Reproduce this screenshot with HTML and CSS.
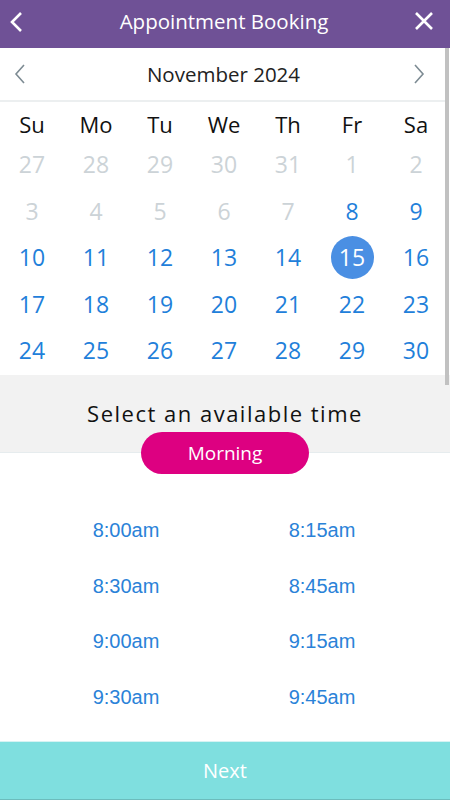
FILE: index.html
```html
<!DOCTYPE html>
<html>
<head>
<meta charset="utf-8">
<link rel="stylesheet" href="styles.css">
</head>
<body>
<div class="app">
  <header class="topbar">
    <svg class="tb-icon back" width="14" height="22" viewBox="0 0 14 22"><path d="M12 2 L3 11 L12 20" fill="none" stroke="#fff" stroke-width="2.6"/></svg>
    <div class="title">Appointment Booking</div>
    <svg class="tb-icon close" width="20" height="20" viewBox="0 0 20 20"><path d="M2 2 L18 18 M18 2 L2 18" fill="none" stroke="#fff" stroke-width="2.6"/></svg>
  </header>
  <div class="scroll">
    <div class="monthbar">
      <svg width="12" height="22" viewBox="0 0 12 22"><path d="M10 2 L2 11 L10 20" fill="none" stroke="#7d8b93" stroke-width="1.6"/></svg>
      <div class="month">November 2024</div>
      <svg width="12" height="22" viewBox="0 0 12 22"><path d="M2 2 L10 11 L2 20" fill="none" stroke="#7d8b93" stroke-width="1.6"/></svg>
    </div>
    <div class="cal">
      <div class="dow">Su</div><div class="dow">Mo</div><div class="dow">Tu</div><div class="dow">We</div><div class="dow">Th</div><div class="dow">Fr</div><div class="dow">Sa</div>
      <div class="d off">27</div><div class="d off">28</div><div class="d off">29</div><div class="d off">30</div><div class="d off">31</div><div class="d off">1</div><div class="d off">2</div>
      <div class="d off">3</div><div class="d off">4</div><div class="d off">5</div><div class="d off">6</div><div class="d off">7</div><div class="d">8</div><div class="d">9</div>
      <div class="d">10</div><div class="d">11</div><div class="d">12</div><div class="d">13</div><div class="d">14</div><div class="d"><span class="sel">15</span></div><div class="d">16</div>
      <div class="d">17</div><div class="d">18</div><div class="d">19</div><div class="d">20</div><div class="d">21</div><div class="d">22</div><div class="d">23</div>
      <div class="d">24</div><div class="d">25</div><div class="d">26</div><div class="d">27</div><div class="d">28</div><div class="d">29</div><div class="d">30</div>
    </div>
    <div class="timehead">
      <div class="prompt">Select an available time</div>
    </div>
    <div class="pillrow"><div class="pill">Morning</div></div>
    <div class="slots">
      <div class="slot">8:00am</div><div class="slot">8:15am</div>
      <div class="slot">8:30am</div><div class="slot">8:45am</div>
      <div class="slot">9:00am</div><div class="slot">9:15am</div>
      <div class="slot">9:30am</div><div class="slot">9:45am</div>
    </div>
    <div class="scrollbar"></div>
  </div>
  <div class="next">Next</div>
</div>
</body>
</html>
```
FILE: styles.css
```css
* { box-sizing: border-box; }
html, body { margin: 0; padding: 0; }
body { width: 450px; height: 800px; overflow: hidden; background: #fff; font-family: "Open Sans", "Liberation Sans", sans-serif; }
.app { width: 450px; height: 800px; display: flex; flex-direction: column; }
.topbar { height: 48px; background: #6f5196; display: flex; align-items: center; justify-content: space-between; padding: 0 16px 0 9px; flex-shrink: 0; }
.topbar .back { margin-top: -4px; }
.topbar .close { margin-top: -6px; }
.title { color: #fff; font-size: 20.5px; margin-top: -6px; margin-left: 11px; }
.scroll { position: relative; flex: 1; overflow: hidden; }
.monthbar { height: 54px; display: flex; align-items: center; justify-content: space-between; padding: 0 20px 0 14px; border-bottom: 2px solid #eceff0; margin-right: 5px; }
.month { font-size: 20.5px; color: #222; margin-top: 0; margin-left: 8px; }
.cal { display: grid; grid-template-columns: repeat(7, 64px); padding-left: 0; }
.dow { height: 39px; padding-top: 5px; display: flex; align-items: center; justify-content: center; font-size: 22px; color: #111; }
.d { height: 46.5px; display: flex; align-items: center; justify-content: center; font-size: 23px; color: #1f80da; }
.d.off { color: #ccd3d7; }
.sel { width: 43px; height: 43px; border-radius: 50%; background: #4a8fe3; color: #fff; display: flex; align-items: center; justify-content: center; }
.timehead { background: #f2f2f2; height: 78px; margin-top: 1px; border-bottom: 1px solid #e6ecee; display: flex; justify-content: center; padding-top: 23px; }
.prompt { font-size: 22px; letter-spacing: 1.5px; color: #111; }
.pillrow { display: flex; justify-content: center; margin-top: -21px; position: relative; }
.pill { width: 168px; height: 42px; border-radius: 21px; background: #dd0081; color: #fff; font-size: 19px; display: flex; align-items: center; justify-content: center; }
.slots { display: grid; grid-template-columns: 196px 196px; grid-auto-rows: 55.7px; padding: 29px 30px 0 28px; font-family: "Liberation Sans", Arial, sans-serif; }
.slot { display: flex; align-items: center; justify-content: center; color: #2a82d8; font-size: 20px; }
.scrollbar { position: absolute; right: 1px; top: 0; width: 4px; height: 337px; background: #c1c1c1; }
.next { height: 59px; flex-shrink: 0; background: #7fdfdf; color: #fff; font-size: 20px; display: flex; align-items: center; justify-content: center; border-top: 1px solid #d6f3f3; border-bottom: 1px solid #6cbcbc; }
```
